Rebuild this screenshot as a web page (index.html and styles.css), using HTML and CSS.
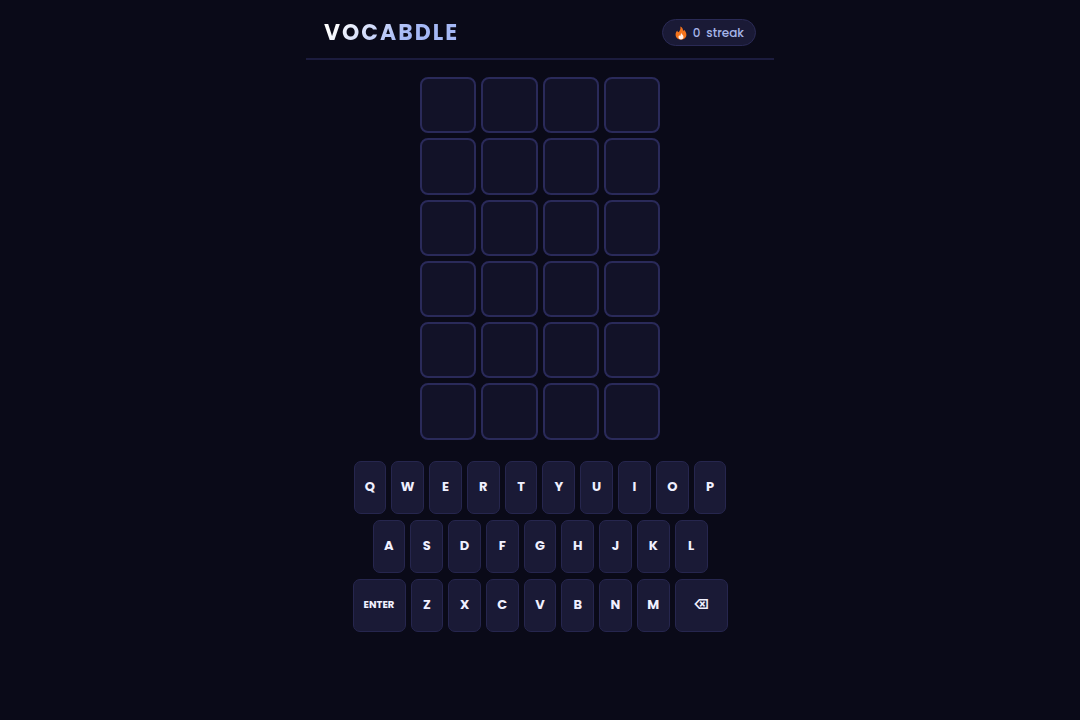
FILE: index.html
```html
<!DOCTYPE html>
<html lang="en">
<head>
    <meta charset="UTF-8">
    <meta name="viewport" content="width=device-width, initial-scale=1.0">
    <title>Vocabdle</title>
    <link rel="stylesheet" href="styles.css">
</head>
<body>
    <div class="app">
        <header class="header">
            <h1 class="logo">VOCABDLE</h1>
            <div class="streak">
                <svg class="flame" viewBox="0 0 12 14" aria-hidden="true">
                    <path fill="#f4731c" d="M5.3 0.4C7.4 1.3 8.3 3 8 5.1c.6-.3.9-.8 1-1.4 1.4 1.2 2.4 3 2.4 5 0 2.8-2.3 4.9-5.4 4.9S.6 11.5.6 8.7c0-1.7.6-3.2 1.6-4.3.1.9.5 1.5 1.1 1.8C4.9 4.8 6 2.7 5.3.4z"/>
                    <path fill="#fff0ea" d="M6 6.6c.1 1.4 2.5 2.3 2.5 4.4 0 1.5-1.1 2.4-2.5 2.4s-2.5-.9-2.5-2.3c0-.8.3-1.4.8-1.9.2.5.5.7.9.8.5-1 .9-2 .8-3.4z"/>
                </svg>
                <span id="streak-count">0</span>
                <span>streak</span>
            </div>
        </header>

        <main class="game">
            <div class="board" id="board"></div>
            <div class="keyboard" id="keyboard"></div>
        </main>
    </div>

    <script src="script.js"></script>
</body>
</html>
```

FILE: styles.css
```css
* {
    margin: 0;
    padding: 0;
    box-sizing: border-box;
}

body {
    font-family: Poppins, Inter, "DejaVu Sans", sans-serif;
    background-color: #0a0a18;
    color: #f0f0ff;
    min-height: 100vh;
}

.app {
    max-width: 468px;
    margin: 0 auto;
}

.header {
    display: flex;
    align-items: center;
    justify-content: space-between;
    padding: 19px 18px 12px;
    border-bottom: 2px solid #1c1c3e;
}

.logo {
    font-size: 22px;
    line-height: 27px;
    font-weight: 700;
    letter-spacing: 2px;
    background: linear-gradient(135deg, #ffffff 10%, #a5b8f5 60%);
    -webkit-background-clip: text;
    background-clip: text;
    color: transparent;
}

.streak {
    display: flex;
    align-items: center;
    gap: 6px;
    height: 27px;
    padding: 0 11px 0 12px;
    background-color: #1a1a36;
    border: 1px solid #2a2a55;
    border-radius: 14px;
    color: #a5b4e8;
    font-size: 12px;
    font-weight: 500;
}

.flame {
    width: 12px;
    height: 14px;
}

.game {
    display: flex;
    flex-direction: column;
    align-items: center;
    gap: 21px;
    padding: 17px 0;
}

.board {
    display: grid;
    grid-template-columns: repeat(4, 1fr);
    gap: 5px;
    width: 240px;
}

.tile {
    aspect-ratio: 1;
    background-color: #121228;
    border: 2px solid #2a2a5a;
    border-radius: 8px;
}

.keyboard {
    display: flex;
    flex-direction: column;
    gap: 6px;
    width: 100%;
    max-width: 375px;
}

.key-row {
    display: flex;
    gap: 5px;
    padding: 0 1px;
}

.key-row:nth-child(2) {
    padding: 0 20px;
}

.key-row:nth-child(3) {
    padding: 0;
}

.key {
    flex: 1;
    min-width: 0;
    height: 53px;
    background-color: #1a1a36;
    border: 1px solid #26264e;
    border-radius: 7px;
    color: #f0f0ff;
    font-family: inherit;
    font-size: 13px;
    font-weight: 700;
    cursor: pointer;
}

.key:hover {
    background-color: #252550;
}

.key.wide {
    flex: 0 0 53px;
}

.key.enter {
    font-size: 10px;
}
```

FILE: script.js
```js
const ROWS = 6;
const WORD_LENGTH = 4;
const KEYS = [
    ['Q', 'W', 'E', 'R', 'T', 'Y', 'U', 'I', 'O', 'P'],
    ['A', 'S', 'D', 'F', 'G', 'H', 'J', 'K', 'L'],
    ['ENTER', 'Z', 'X', 'C', 'V', 'B', 'N', 'M', '⌫']
];

const board = document.getElementById('board');
const keyboard = document.getElementById('keyboard');

for (let i = 0; i < ROWS * WORD_LENGTH; i++) {
    const tile = document.createElement('div');
    tile.className = 'tile';
    board.appendChild(tile);
}

KEYS.forEach(keys => {
    const row = document.createElement('div');
    row.className = 'key-row';
    keys.forEach(key => {
        const button = document.createElement('button');
        button.type = 'button';
        button.className = 'key';
        button.textContent = key;
        if (key === 'ENTER') {
            button.classList.add('wide', 'enter');
        }
        if (key === '⌫') {
            button.classList.add('wide');
            button.setAttribute('aria-label', 'Backspace');
        }
        row.appendChild(button);
    });
    keyboard.appendChild(row);
});
```
